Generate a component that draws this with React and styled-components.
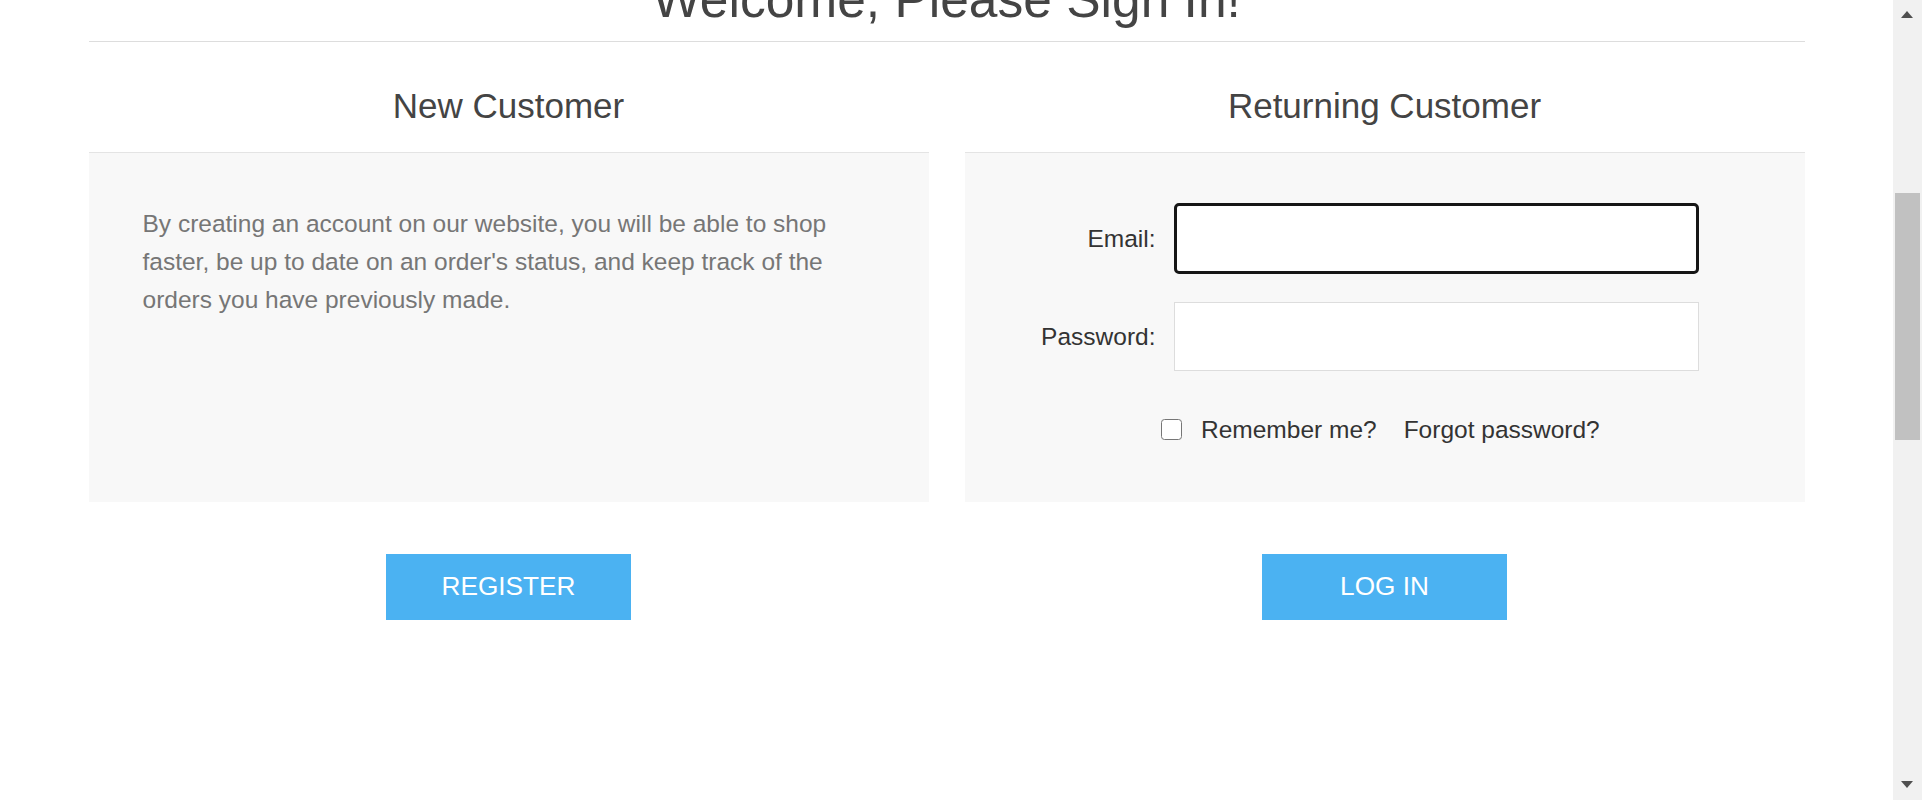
import styled, { createGlobalStyle } from 'styled-components'

const GlobalStyle = createGlobalStyle`
  html, body {
    margin: 0;
    padding: 0;
    background: #ffffff;
    font-family: "Liberation Sans", Arial, sans-serif;
    overflow: hidden;
  }
  * {
    box-sizing: border-box;
  }
`

function App() {
  return (
    <>
      <GlobalStyle />
      <Page>
        <Main>
          <Container>
            <PageTitle>Welcome, Please Sign In!</PageTitle>
            <Columns>
              <Column>
                <ColumnHeading>New Customer</ColumnHeading>
                <Panel $pad="52px 54px">
                  <Intro>
                    By creating an account on our website, you will be able to shop faster, be up to
                    date on an order's status, and keep track of the orders you have previously made.
                  </Intro>
                </Panel>
                <ButtonRow>
                  <ActionButton>Register</ActionButton>
                </ButtonRow>
              </Column>

              <Column>
                <ColumnHeading>Returning Customer</ColumnHeading>
                <Panel $pad="51px 0 0">
                  <LoginForm>
                    <FieldLabel htmlFor="email">Email:</FieldLabel>
                    <TextInput id="email" type="email" $focused />
                    <FieldLabel htmlFor="password">Password:</FieldLabel>
                    <TextInput id="password" type="password" />
                  </LoginForm>
                  <OptionsRow>
                    <CheckBox />
                    <OptionText>Remember me?</OptionText>
                    <OptionLink href="#">Forgot password?</OptionLink>
                  </OptionsRow>
                </Panel>
                <ButtonRow>
                  <ActionButton>Log in</ActionButton>
                </ButtonRow>
              </Column>
            </Columns>
          </Container>
        </Main>
        <ScrollTrack>
          <ScrollArrow $dir="up" />
          <ScrollThumb />
          <ScrollArrow $dir="down" />
        </ScrollTrack>
      </Page>
    </>
  )
}

const Page = styled.div`
  display: flex;
  width: 100%;
  height: 800px;
  overflow: hidden;
`

const Main = styled.main`
  flex: 1;
  min-width: 0;
`

const Container = styled.div`
  width: 1716px;
  margin: 0 auto;
`

const PageTitle = styled.h1`
  margin: -26px 0 0;
  padding-bottom: 15px;
  font-size: 51.5px;
  line-height: 51.5px;
  font-weight: 400;
  color: #444444;
  text-align: center;
  border-bottom: 1.5px solid #dddddd;
`

const Columns = styled.div`
  display: grid;
  grid-template-columns: 1fr 1fr;
  column-gap: 36px;
`

const Column = styled.section`
  display: flex;
  flex-direction: column;
`

const ColumnHeading = styled.h2`
  margin: 0;
  padding: 47px 0 29px;
  font-size: 35px;
  line-height: 34px;
  font-weight: 400;
  color: #444444;
  text-align: center;
`

const Panel = styled.div`
  height: 350px;
  padding: ${({ $pad }) => $pad};
  background: #f8f8f8;
  border-top: 1.5px solid #e4e4e4;
`

const Intro = styled.p`
  margin: 0;
  font-size: 24.5px;
  line-height: 38.4px;
  color: #767676;
`

const LoginForm = styled.div`
  display: grid;
  grid-template-columns: 191px 525px;
  grid-auto-rows: 70px;
  column-gap: 18px;
  row-gap: 28px;
  align-items: center;
`

const FieldLabel = styled.label`
  text-align: right;
  font-size: 24.5px;
  color: #333333;
`

const TextInput = styled.input`
  width: 100%;
  height: ${({ $focused }) => ($focused ? '71px' : '69px')};
  padding: 0 14px;
  font: inherit;
  background: #ffffff;
  border: ${({ $focused }) => ($focused ? '3px solid #161616' : '1px solid #dddddd')};
  border-radius: ${({ $focused }) => ($focused ? '5px' : '0')};
  outline: none;
`

const OptionsRow = styled.div`
  display: flex;
  align-items: center;
  margin-top: 43px;
  padding-left: 196px;
  height: 30px;
`

const CheckBox = styled.span`
  width: 21.5px;
  height: 21.5px;
  margin-right: 19px;
  background: #ffffff;
  border: 1.5px solid #767676;
  border-radius: 3.5px;
`

const OptionText = styled.span`
  font-size: 24.5px;
  color: #333333;
  margin-right: 27px;
`

const OptionLink = styled.a`
  font-size: 24.5px;
  color: #333333;
  text-decoration: none;
`

const ButtonRow = styled.div`
  display: flex;
  justify-content: center;
  padding-top: 52px;
`

const ActionButton = styled.button`
  width: 245px;
  height: 66px;
  border: none;
  background: #4bb2f2;
  color: #ffffff;
  font-family: "Liberation Sans", Arial, sans-serif;
  font-size: 26.2px;
  text-transform: uppercase;
  cursor: pointer;
`

const ScrollTrack = styled.div`
  width: 29px;
  flex-shrink: 0;
  background: #f1f1f1;
  position: relative;
`

const ScrollThumb = styled.div`
  position: absolute;
  top: 193px;
  left: 2px;
  width: 25px;
  height: 247px;
  background: #c1c1c1;
`

const ScrollArrow = styled.div`
  position: absolute;
  left: 8px;
  width: 0;
  height: 0;
  border-left: 6.5px solid transparent;
  border-right: 6.5px solid transparent;
  ${({ $dir }) =>
    $dir === 'up'
      ? 'top: 11px; border-bottom: 7px solid #505050;'
      : 'bottom: 12px; border-top: 7px solid #505050;'}
`

export default App
